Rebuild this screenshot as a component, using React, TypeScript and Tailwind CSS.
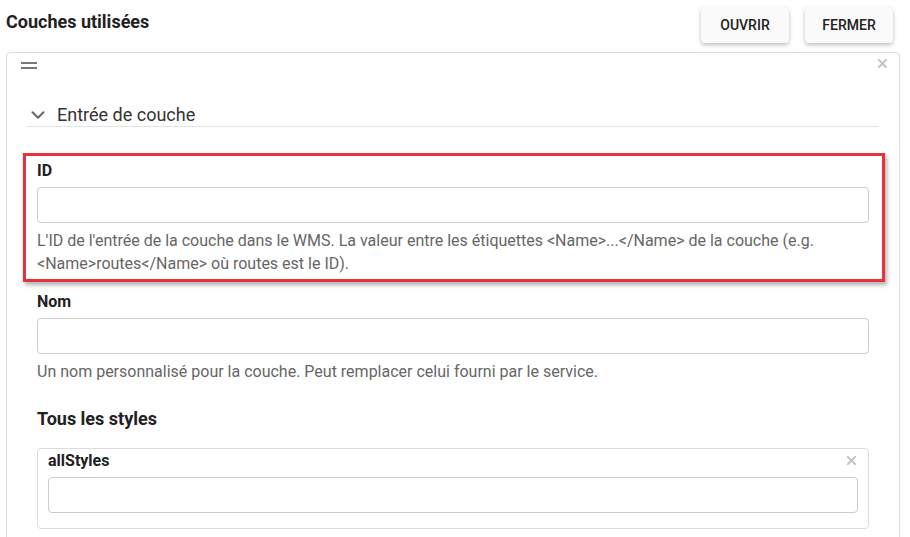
import { ChevronDown } from "lucide-react"

const CloseX = ({ className = "" }: { className?: string }) => (
  <svg width="9" height="9" viewBox="0 0 9 9" className={className}>
    <path d="M1 1 L8 8 M8 1 L1 8" stroke="currentColor" strokeWidth="2" strokeLinecap="square" />
  </svg>
)

type FieldProps = {
  label: string
  help: string
}

const Field = ({ label, help }: FieldProps) => (
  <div className="flex flex-col">
    <label className="text-[16px] leading-5 font-bold text-[#212121]">{label}</label>
    <input className="mt-[6px] h-9 w-full rounded border border-[#ccc] bg-white outline-none" />
    <p className="mt-[6px] text-[16px] leading-[23px] text-[#666]">{help}</p>
  </div>
)

export default function App() {
  return (
    <div className="h-[537px] overflow-hidden bg-white pl-[6px] pr-[10px] font-['Roboto',sans-serif] text-[#212121]">
      {/* header */}
      <div className="flex items-start justify-between pt-[7px]">
        <h2 className="mt-[3px] text-[18px] leading-6 font-bold text-[#212121]">Couches utilisées</h2>
        <div className="mr-[7px] flex gap-4">
          <button className="h-9 w-[88px] rounded-sm bg-[#fafafa] text-[14px] font-medium text-[#212121] shadow-[0_2px_4px_rgba(0,0,0,0.25)]">
            OUVRIR
          </button>
          <button className="h-9 w-[88px] rounded-sm bg-[#fafafa] text-[14px] font-medium text-[#212121] shadow-[0_2px_4px_rgba(0,0,0,0.25)]">
            FERMER
          </button>
        </div>
      </div>

      {/* card */}
      <div className="relative mt-[9px] h-[520px] rounded border border-[#ddd] px-5">
        <CloseX className="absolute right-[12px] top-[6px] text-[#c4c4c4]" />
        <div className="ml-[-6px] mt-[9px] flex w-4 flex-col gap-[3px]">
          <span className="h-[2px] bg-[#777]" />
          <span className="h-[2px] bg-[#777]" />
        </div>

        <div className="mt-[34px] flex h-6 items-center border-b border-[#e3e3e3]">
          <ChevronDown size={22} strokeWidth={2.2} className="text-[#666]" />
          <span className="ml-[8px] text-[18px] leading-6 text-[#333]">Entrée de couche</span>
        </div>

        <div className="px-[10px]">
          {/* highlighted field */}
          <div className="ml-[-14px] mr-[-16px] mt-[26px] border-[3px] border-[#e8313a] pb-[4px] pl-[11px] pr-[13px] pt-[5px] shadow-[2px_3px_4px_rgba(0,0,0,0.3)]">
            <Field
              label="ID"
              help="L'ID de l'entrée de la couche dans le WMS. La valeur entre les étiquettes <Name>...</Name> de la couche (e.g. <Name>routes</Name> où routes est le ID)."
            />
          </div>

          <div className="mt-[10px]">
            <Field
              label="Nom"
              help="Un nom personnalisé pour la couche. Peut remplacer celui fourni par le service."
            />
          </div>

          <h3 className="mt-[24px] text-[18px] leading-6 font-bold text-[#212121]">Tous les styles</h3>

          <div className="relative mt-[17px] rounded border border-[#ddd] px-[10px] pb-[15px] pt-[2px]">
            <CloseX className="absolute right-[12px] top-[7px] text-[#c4c4c4]" />
            <label className="block text-[16px] leading-5 font-bold text-[#212121]">allStyles</label>
            <input className="mt-[6px] h-9 w-full rounded border border-[#ccc] bg-white outline-none" />
          </div>
        </div>
      </div>
    </div>
  )
}
